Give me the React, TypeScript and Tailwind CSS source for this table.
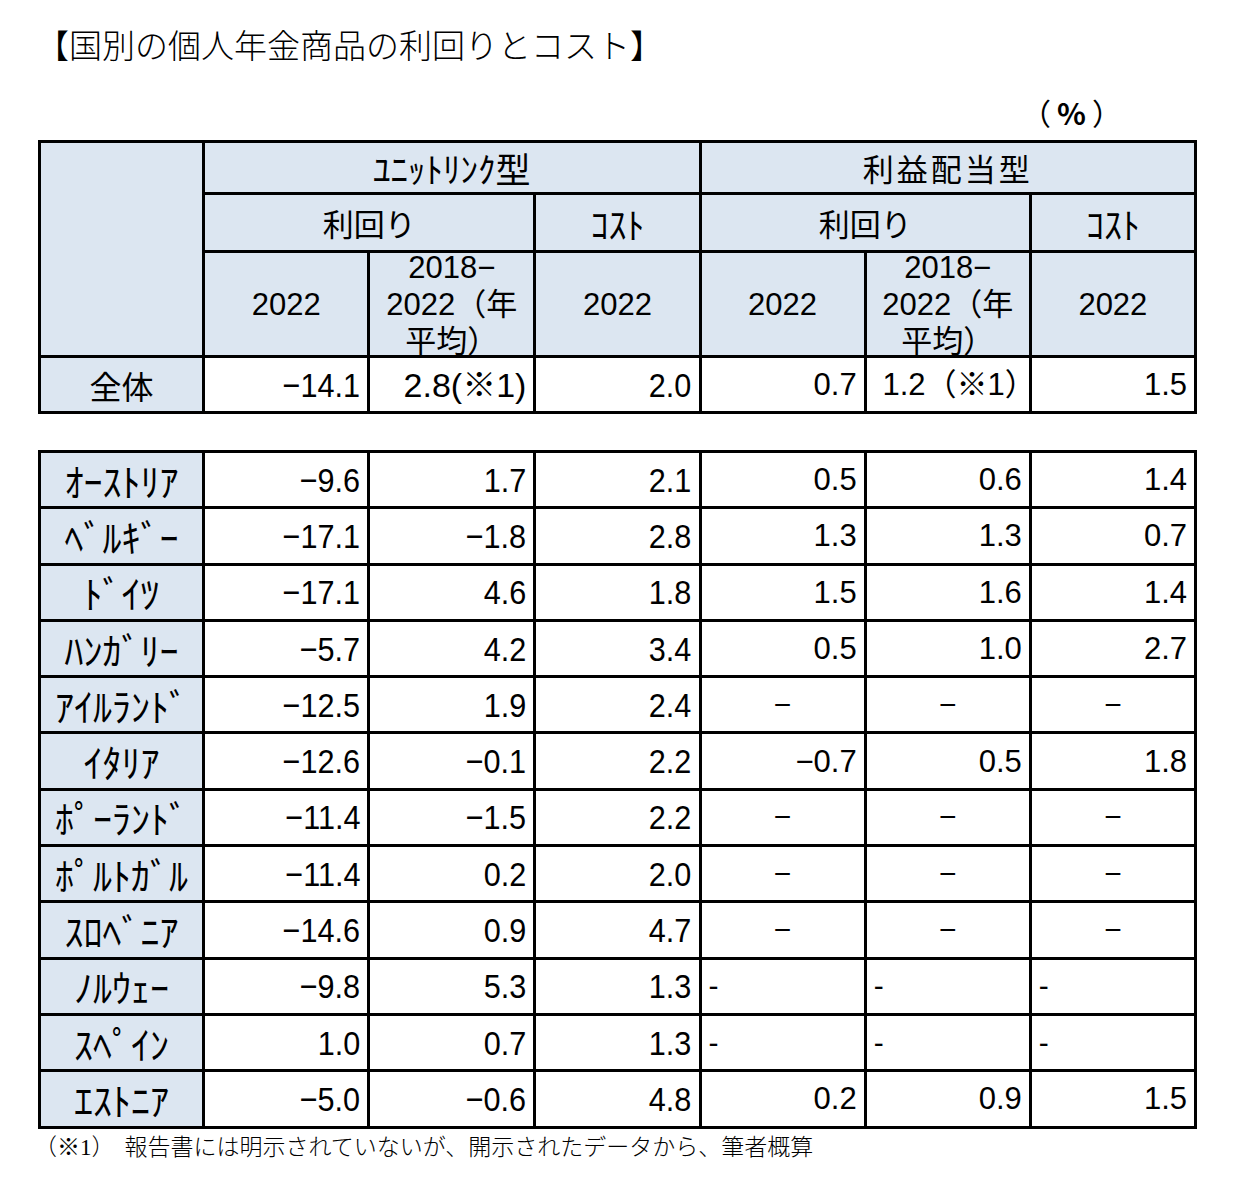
import React from "react";

const head = "bg-[#dce6f1] border-[3px] border-black text-center align-middle p-0 leading-none";
const cell = "border-[3px] border-black align-middle p-0 leading-none";
const jp = "font-['Noto_Sans_CJK_JP',sans-serif]";
const latin = "font-['Liberation_Sans','Noto_Sans_CJK_JP',sans-serif]";
const narrowNum = `${latin} text-[34px] text-right pr-[7px]`;
const wideNum = `${latin} text-[31px] text-right pr-[7px]`;

type Right = string[] | "center" | "left";

const rows: { name: string; left: string[]; right: Right }[] = [
  { name: "ｵｰｽﾄﾘｱ", left: ["−9.6", "1.7", "2.1"], right: ["0.5", "0.6", "1.4"] },
  { name: "ﾍﾞﾙｷﾞｰ", left: ["−17.1", "−1.8", "2.8"], right: ["1.3", "1.3", "0.7"] },
  { name: "ﾄﾞｲﾂ", left: ["−17.1", "4.6", "1.8"], right: ["1.5", "1.6", "1.4"] },
  { name: "ﾊﾝｶﾞﾘｰ", left: ["−5.7", "4.2", "3.4"], right: ["0.5", "1.0", "2.7"] },
  { name: "ｱｲﾙﾗﾝﾄﾞ", left: ["−12.5", "1.9", "2.4"], right: "center" },
  { name: "ｲﾀﾘｱ", left: ["−12.6", "−0.1", "2.2"], right: ["−0.7", "0.5", "1.8"] },
  { name: "ﾎﾟｰﾗﾝﾄﾞ", left: ["−11.4", "−1.5", "2.2"], right: "center" },
  { name: "ﾎﾟﾙﾄｶﾞﾙ", left: ["−11.4", "0.2", "2.0"], right: "center" },
  { name: "ｽﾛﾍﾞﾆｱ", left: ["−14.6", "0.9", "4.7"], right: "center" },
  { name: "ﾉﾙｳｪｰ", left: ["−9.8", "5.3", "1.3"], right: "left" },
  { name: "ｽﾍﾟｲﾝ", left: ["1.0", "0.7", "1.3"], right: "left" },
  { name: "ｴｽﾄﾆｱ", left: ["−5.0", "−0.6", "4.8"], right: ["0.2", "0.9", "1.5"] },
];

function Cols() {
  return (
    <colgroup>
      <col className="w-[164px]" />
      <col className="w-[165px]" />
      <col className="w-[166px]" />
      <col className="w-[165px]" />
      <col className="w-[165px]" />
      <col className="w-[165px]" />
      <col className="w-[165px]" />
    </colgroup>
  );
}

// condensed look of the left-hand (unit-linked) figures
function Narrow({ v }: { v: string }) {
  return <span className="inline-block origin-right scale-x-[0.9]">{v}</span>;
}

function Period() {
  return (
    <div className={`h-[102px] overflow-hidden flex flex-col justify-center ${latin} text-[31px] leading-[37px]`}>
      <div>2018−</div>
      <div>2022（年</div>
      <div>平均）</div>
    </div>
  );
}

function RightCells({ right }: { right: Right }) {
  if (right === "center") {
    return (
      <>
        {[0, 1, 2].map((i) => (
          <td key={i} className={`${cell} text-center ${latin} text-[30px]`}>
            −
          </td>
        ))}
      </>
    );
  }
  if (right === "left") {
    return (
      <>
        {[0, 1, 2].map((i) => (
          <td key={i} className={`${cell} text-left pl-[7px] ${latin} text-[30px]`}>
            -
          </td>
        ))}
      </>
    );
  }
  return (
    <>
      {right.map((v, i) => (
        <td key={i} className={`${cell} ${wideNum}`}>
          {v}
        </td>
      ))}
    </>
  );
}

export default function App() {
  return (
    <div className="w-[1236px] h-[1188px] bg-white text-black overflow-hidden">
      {/* Title */}
      <div className="pt-[27px] pl-[36px] h-[66px] font-['Liberation_Serif','Noto_Sans_CJK_JP',serif] font-light text-[33px] leading-[40px]">
        【国別の個人年金商品の利回りとコスト】
      </div>

      {/* Unit */}
      <div className="h-[74px] flex items-center justify-end pr-[114px] pt-[28px] pb-[10px]">
        <span className={`${jp} text-[30px]`}>
          （<span className="font-bold mx-[6px]">%</span>）
        </span>
      </div>

      {/* Summary table */}
      <table className="ml-[38px] w-[1159px] table-fixed border-collapse">
        <Cols />
        <tbody>
          <tr className="h-[52px]">
            <td rowSpan={3} className={head}></td>
            <td colSpan={3} className={`${head} ${jp} text-[35px]`}>ﾕﾆｯﾄﾘﾝｸ型</td>
            <td colSpan={3} className={`${head} ${jp} text-[31px] tracking-[3px]`}>利益配当型</td>
          </tr>
          <tr className="h-[58px]">
            <td colSpan={2} className={`${head} ${jp} text-[31px]`}>利回り</td>
            <td className={`${head} ${jp} text-[36px]`}>ｺｽﾄ</td>
            <td colSpan={2} className={`${head} ${jp} text-[31px]`}>利回り</td>
            <td className={`${head} ${jp} text-[36px]`}>ｺｽﾄ</td>
          </tr>
          <tr className="h-[105px]">
            <td className={`${head} ${latin} text-[31px]`}>2022</td>
            <td className={head}><Period /></td>
            <td className={`${head} ${latin} text-[31px]`}>2022</td>
            <td className={`${head} ${latin} text-[31px]`}>2022</td>
            <td className={head}><Period /></td>
            <td className={`${head} ${latin} text-[31px]`}>2022</td>
          </tr>
          <tr className="h-[56px]">
            <td className={`${head} ${jp} text-[32px]`}>全体</td>
            <td className={`${cell} ${narrowNum}`}><Narrow v="−14.1" /></td>
            <td className={`${cell} ${narrowNum}`}>2.8(※1)</td>
            <td className={`${cell} ${narrowNum}`}><Narrow v="2.0" /></td>
            <td className={`${cell} ${wideNum}`}>0.7</td>
            <td className={`${cell} ${wideNum}`}>
              <span className="-mr-[14px]">1.2（※1）</span>
            </td>
            <td className={`${cell} ${wideNum}`}>1.5</td>
          </tr>
        </tbody>
      </table>

      {/* Country table */}
      <table className="ml-[38px] mt-[36px] w-[1159px] table-fixed border-collapse">
        <Cols />
        <tbody>
          {rows.map((r) => (
            <tr key={r.name} className="h-[56.3px]">
              <td className={`${head} ${jp} text-[38px]`}>{r.name}</td>
              {r.left.map((v, i) => (
                <td key={i} className={`${cell} ${narrowNum}`}>
                  <Narrow v={v} />
                </td>
              ))}
              <RightCells right={r.right} />
            </tr>
          ))}
        </tbody>
      </table>

      {/* Footnote */}
      <div className="pl-[34px] pt-[3px] font-['Liberation_Serif','Noto_Sans_CJK_JP',serif] font-light text-[23px] leading-[32px]">
        （※1）<span className="ml-[10px]">報告書には明示されていないが、開示されたデータから、筆者概算</span>
      </div>
    </div>
  );
}
